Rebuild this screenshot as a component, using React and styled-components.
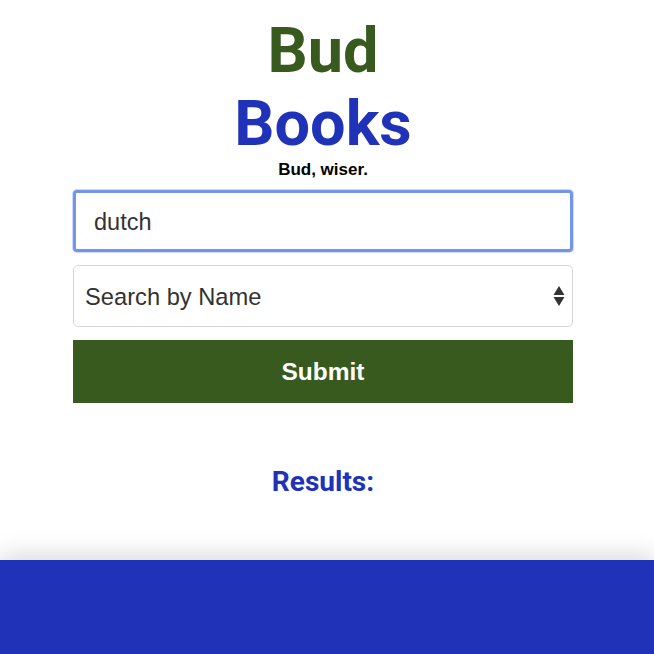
import React from "react";
import styled, { createGlobalStyle } from "styled-components";

const Global = createGlobalStyle`
  html, body { margin: 0; padding: 0; background: #fff; }
  body { font-family: Roboto, "Liberation Sans", Arial, sans-serif; }
  * { box-sizing: border-box; }
`;

const Page = styled.div`
  display: flex;
  flex-direction: column;
  min-height: 654px;
`;

const Main = styled.main`
  width: 500px;
  margin: 0 0 0 73px;
  display: flex;
  flex-direction: column;
  align-items: stretch;
  padding-top: 14px;
`;

const Title = styled.h1`
  margin: 0;
  font-family: Roboto, "Liberation Sans", Arial, sans-serif;
  font-weight: 700;
  font-size: 63px;
  line-height: 73px;
  text-align: center;
  color: ${(p) => p.$color};
`;

const Tagline = styled.p`
  margin: 0;
  font-family: "Liberation Sans", Arial, sans-serif;
  font-weight: 700;
  font-size: 17px;
  line-height: 19px;
  text-align: center;
  color: #000;
`;

const Form = styled.form`
  display: flex;
  flex-direction: column;
  gap: 13px;
  margin-top: 11px;
`;

const TextInput = styled.input`
  height: 62px;
  width: 100%;
  border: 3px solid #7496e8;
  border-radius: 4px;
  box-shadow: 0 0 0 1px rgba(116, 150, 232, 0.35);
  padding: 3px 18px 0;
  font-family: "Liberation Sans", Arial, sans-serif;
  font-size: 23.5px;
  color: #333;
  outline: none;
`;

const SelectWrap = styled.div`
  position: relative;
  height: 62px;
  border: 1px solid #d6d6d6;
  border-radius: 5px;
  display: flex;
  align-items: center;
  padding: 3px 11px 0;
  font-family: "Liberation Sans", Arial, sans-serif;
  font-size: 23.7px;
  color: #333;
`;

const Arrows = styled.svg`
  position: absolute;
  right: 7px;
  top: 50%;
  transform: translateY(-50%);
`;

const Submit = styled.button`
  height: 63px;
  border: none;
  background: #385a1f;
  color: #fff;
  font-family: "Liberation Sans", Arial, sans-serif;
  font-weight: 700;
  font-size: 24.5px;
  padding-top: 2px;
  cursor: pointer;
`;

const Results = styled.h3`
  margin: 63px 0 0;
  font-family: Roboto, "Liberation Sans", Arial, sans-serif;
  font-weight: 700;
  font-size: 28px;
  line-height: 32px;
  text-align: center;
  color: #2033b8;
`;

const Footer = styled.footer`
  margin-top: auto;
  height: 94px;
  background: #2033b8;
  box-shadow: 0 -6px 22px rgba(0, 0, 0, 0.14);
`;

export default function App() {
  return (
    <Page>
      <Global />
      <Main>
        <Title $color="#385a1f">Bud</Title>
        <Title $color="#2033b8">Books</Title>
        <Tagline>Bud, wiser.</Tagline>
        <Form onSubmit={(e) => e.preventDefault()}>
          <TextInput defaultValue="dutch" />
          <SelectWrap>
            Search by Name
            <Arrows width="12" height="22" viewBox="0 0 12 22">
              <path d="M6 1 L11.5 10 L0.5 10 Z" fill="#333" />
              <path d="M0.5 12 L11.5 12 L6 21 Z" fill="#333" />
            </Arrows>
          </SelectWrap>
          <Submit type="submit">Submit</Submit>
        </Form>
        <Results>Results:</Results>
      </Main>
      <Footer />
    </Page>
  );
}
